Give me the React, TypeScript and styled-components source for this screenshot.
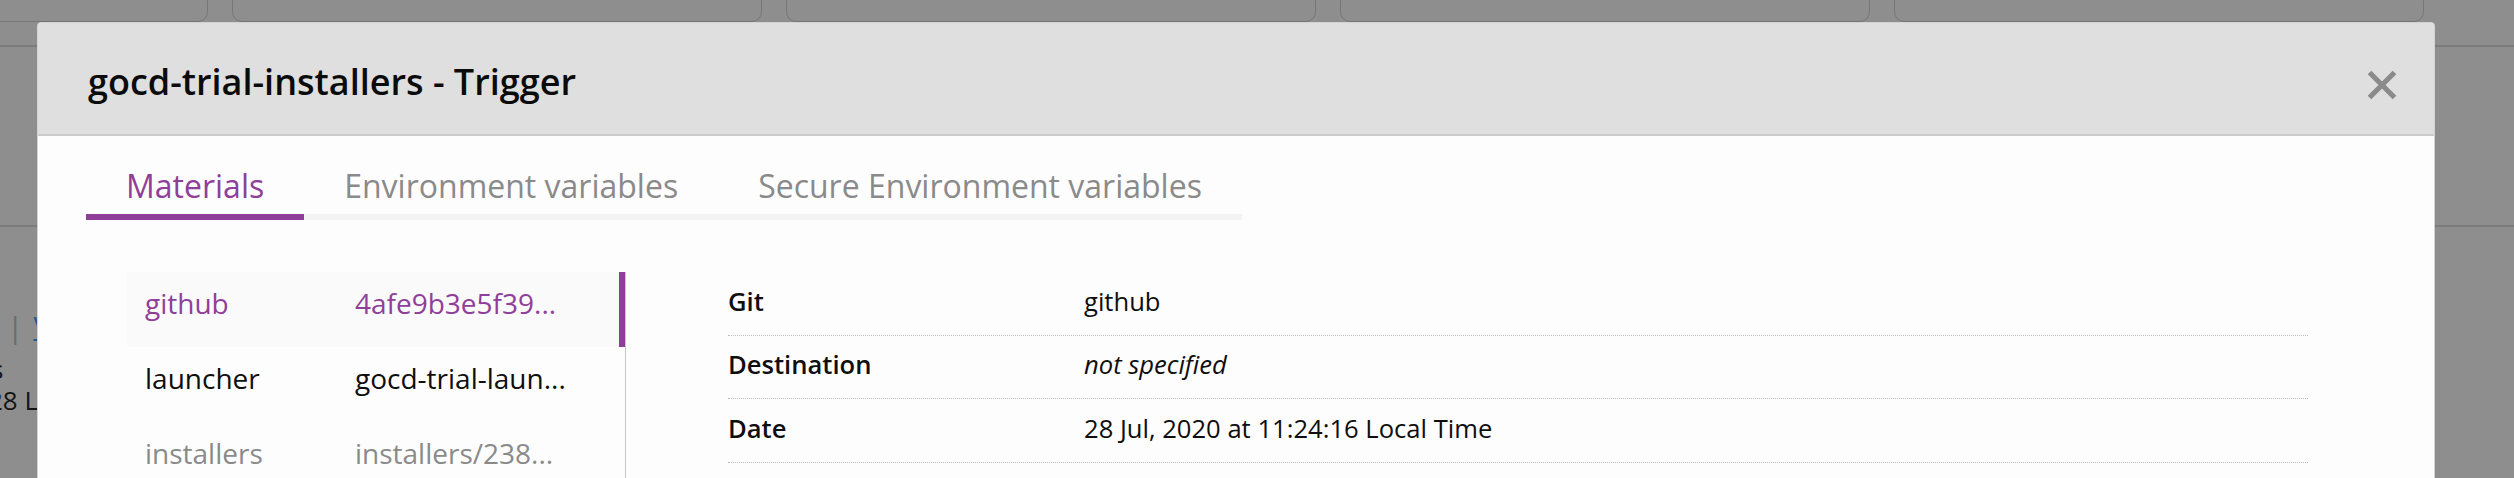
import styled, { createGlobalStyle } from "styled-components";

const PURPLE = "#8f3f99";

const GlobalStyle = createGlobalStyle`
  html, body {
    margin: 0;
    padding: 0;
  }
  body {
    background: #8e8e8e;
    font-family: "Open Sans", "Noto Sans", sans-serif;
    overflow: hidden;
  }
`;

type Material = {
  name: string;
  revision: string;
  state: "selected" | "normal" | "muted";
};

const materials: Material[] = [
  { name: "github", revision: "4afe9b3e5f39...", state: "selected" },
  { name: "launcher", revision: "gocd-trial-laun...", state: "normal" },
  { name: "installers", revision: "installers/238...", state: "muted" },
];

type Detail = { label: string; value: string; empty?: boolean };

const details: Detail[] = [
  { label: "Git", value: "github" },
  { label: "Destination", value: "not specified", empty: true },
  { label: "Date", value: "28 Jul, 2020 at 11:24:16 Local Time" },
];

const tabs = ["Materials", "Environment variables", "Secure Environment variables"];

const CloseIcon = () => (
  <svg width="32" height="32" viewBox="0 0 32 32">
    <path d="M3.5 3.5 L28.5 28.5 M28.5 3.5 L3.5 28.5" stroke="#8a8a8a" strokeWidth="5.2" fill="none" />
  </svg>
);

export default function App() {
  return (
    <>
      <GlobalStyle />
      <Page>
        {/* dimmed pipeline page behind the modal */}
        <Backdrop>
          <CardStrip>
            {[0, 1, 2, 3, 4].map((i) => (
              <Card key={i} />
            ))}
          </CardStrip>
          <Rule $top={23} />
          <Rule $top={178} />
          <LinkRow>
            <Sep>|</Sep>
            <BackLink>VSM</BackLink>
          </LinkRow>
          <BackText $top={6} $left={-9}>
            s
          </BackText>
          <BackText $top={-3} $left={-12}>
            28 Local Time
          </BackText>
        </Backdrop>

        <Modal>
          <Header>
            <Title>gocd-trial-installers - Trigger</Title>
            <CloseButton>
              <CloseIcon />
            </CloseButton>
          </Header>

          <Body>
            <TabBar>
              {tabs.map((t, i) => (
                <Tab key={t} $active={i === 0}>
                  {t}
                </Tab>
              ))}
            </TabBar>

            <Content>
              <MaterialList>
                {materials.map((m) => (
                  <MaterialRow key={m.name} $state={m.state}>
                    <span>{m.name}</span>
                    <span>{m.revision}</span>
                  </MaterialRow>
                ))}
              </MaterialList>

              <DetailTable>
                {details.map((d) => (
                  <DetailRow key={d.label}>
                    <DetailLabel>{d.label}</DetailLabel>
                    <DetailValue $empty={d.empty}>{d.value}</DetailValue>
                  </DetailRow>
                ))}
              </DetailTable>
            </Content>
          </Body>
        </Modal>
      </Page>
    </>
  );
}

const Page = styled.div`
  position: relative;
  width: 2514px;
  height: 478px;
  overflow: hidden;
`;

const Backdrop = styled.div`
  display: flex;
  flex-direction: column;
  color: #141414;
  font-size: 26px;
`;

const CardStrip = styled.div`
  display: flex;
  gap: 24px;
  margin-top: -78px;
  margin-left: -322px;
`;

const Card = styled.div`
  flex: 0 0 530px;
  height: 100px;
  box-sizing: border-box;
  border: 1px solid #767676;
  border-radius: 10px;
`;

const Rule = styled.div<{ $top: number }>`
  margin-top: ${(p) => p.$top}px;
  border-top: 2px solid #7c7c7c;
`;

const LinkRow = styled.div`
  display: flex;
  align-items: center;
  gap: 10px;
  margin-top: 79px;
  padding-left: 7px;
  height: 40px;
  font-size: 28px;
`;

const Sep = styled.span`
  color: #6c6c6c;
  font-size: 30px;
`;

const BackLink = styled.span`
  color: #1f5a8f;
  text-decoration: underline;
`;

const BackText = styled.div<{ $top: number; $left: number }>`
  margin-top: ${(p) => p.$top}px;
  margin-left: ${(p) => p.$left}px;
  line-height: 34px;
  white-space: nowrap;
`;

const Modal = styled.div`
  position: absolute;
  left: 37px;
  top: 22px;
  width: 2398px;
  height: 520px;
  box-sizing: border-box;
  background: #fdfdfd;
  border: 1px solid #d2d2d2;
  border-radius: 4px 4px 0 0;
  overflow: hidden;
`;

const Header = styled.div`
  display: flex;
  align-items: center;
  justify-content: space-between;
  height: 113px;
  box-sizing: border-box;
  padding: 5px 36px 0 50px;
  background: #dfdfdf;
  border-bottom: 2px solid #cacaca;
`;

const Title = styled.h2`
  margin: 0;
  font-size: 36px;
  font-weight: 600;
  color: #0b0b0b;
`;

const CloseButton = styled.div`
  display: flex;
  margin-top: 8px;
  cursor: pointer;
`;

const Body = styled.div`
  padding: 26px 0 0 48px;
`;

const TabBar = styled.div`
  display: inline-flex;
`;

const Tab = styled.div<{ $active?: boolean }>`
  padding: 0 40px 4px;
  line-height: 48px;
  font-size: 32px;
  color: ${(p) => (p.$active ? PURPLE : "#8a8a8a")};
  border-bottom: 6px solid ${(p) => (p.$active ? PURPLE : "#f3f3f3")};
  white-space: nowrap;
`;

const Content = styled.div`
  display: flex;
  align-items: flex-start;
  margin-top: 52px;
  padding-left: 41px;
`;

const MaterialList = styled.div`
  display: flex;
  flex-direction: column;
  width: 499px;
  height: 260px;
  box-sizing: border-box;
  border-right: 1px solid #c6c6c6;
`;

const rowColor = { selected: PURPLE, normal: "#0e0e0e", muted: "#8a8a8a" };

const MaterialRow = styled.div<{ $state: Material["state"] }>`
  display: grid;
  grid-template-columns: 210px 1fr;
  align-items: center;
  height: 75px;
  box-sizing: border-box;
  padding: 0 0 13px 18px;
  font-size: 28px;
  white-space: nowrap;
  color: ${(p) => rowColor[p.$state]};
  background: ${(p) => (p.$state === "selected" ? "#fafafa" : "transparent")};
  border-right: 6px solid ${(p) => (p.$state === "selected" ? PURPLE : "transparent")};
`;

const DetailTable = styled.div`
  display: flex;
  flex-direction: column;
  width: 1580px;
  margin-left: 102px;
`;

const DetailRow = styled.div`
  display: grid;
  grid-template-columns: 356px 1fr;
  align-items: center;
  height: 63.5px;
  box-sizing: border-box;
  padding-bottom: 4px;
  border-bottom: 1px dotted #bdbdbd;
  font-size: 25.6px;
  color: #0e0e0e;
`;

const DetailLabel = styled.span`
  font-weight: 600;
`;

const DetailValue = styled.span<{ $empty?: boolean }>`
  font-style: ${(p) => (p.$empty ? "italic" : "normal")};
`;
